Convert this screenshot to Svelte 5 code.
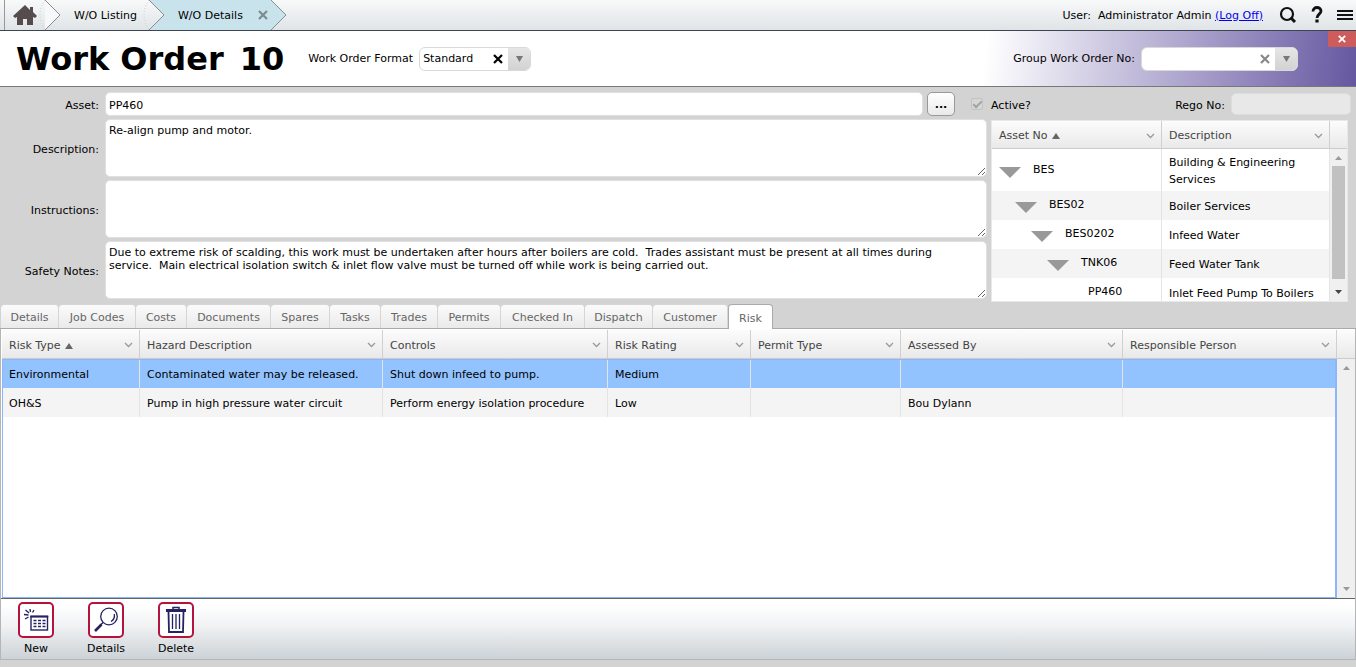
<script>
	let activeTab = 'Risk';
	let selected = 0;
	let format = 'Standard';
	let groupNo = '';

	let asset = 'PP460';
	let description = 'Re-align pump and motor.';
	let instructions = '';
	let safetyNotes = 'Due to extreme risk of scalding, this work must be undertaken after hours after boilers are cold.  Trades assistant must be present at all times during service.  Main electrical isolation switch & inlet flow valve must be turned off while work is being carried out.';

	const tabs = [
		{ name: 'Details', width: 58 },
		{ name: 'Job Codes', width: 77 },
		{ name: 'Costs', width: 51 },
		{ name: 'Documents', width: 84 },
		{ name: 'Spares', width: 59 },
		{ name: 'Tasks', width: 51 },
		{ name: 'Trades', width: 57 },
		{ name: 'Permits', width: 63 },
		{ name: 'Checked In', width: 84 },
		{ name: 'Dispatch', width: 68 },
		{ name: 'Customer', width: 75 },
		{ name: 'Risk', width: 45 }
	];

	const tree = [
		{ no: 'BES', text: 'Building & Engineering Services' },
		{ no: 'BES02', text: 'Boiler Services' },
		{ no: 'BES0202', text: 'Infeed Water' },
		{ no: 'TNK06', text: 'Feed Water Tank' },
		{ no: 'PP460', text: 'Inlet Feed Pump To Boilers', leaf: true }
	];

	const columns = [
		{ name: 'Risk Type', width: 138, sorted: true },
		{ name: 'Hazard Description', width: 243 },
		{ name: 'Controls', width: 225 },
		{ name: 'Risk Rating', width: 143 },
		{ name: 'Permit Type', width: 150 },
		{ name: 'Assessed By', width: 222 },
		{ name: 'Responsible Person' }
	];

	const risks = [
		['Environmental', 'Contaminated water may be released.', 'Shut down infeed to pump.', 'Medium', '', '', ''],
		['OH&S', 'Pump in high pressure water circuit', 'Perform energy isolation procedure', 'Low', '', 'Bou Dylann', '']
	];
</script>

{#snippet cross(size)}
	<svg width={size} height={size} viewBox="0 0 10 10"><path d="M1 1l8 8M9 1l-8 8" stroke="currentColor" stroke-width="2.2" /></svg>
{/snippet}

{#snippet heading(name, sorted)}
	<div class="heading">
		<span>{name}</span>
		{#if sorted}<svg width="8" height="7"><path d="M4 1l4 6H0z" fill="#666" /></svg>{/if}
		<svg class="chevron" width="9" height="6"><path d="M1 1l3.5 3.5L8 1" fill="none" stroke="#999" stroke-width="1.3" /></svg>
	</div>
{/snippet}

{#snippet arrow(up, color)}
	<svg width="7" height="4"><path d={up ? 'M0 4h7L3.5 0z' : 'M0 0h7L3.5 4z'} fill={color} /></svg>
{/snippet}

<div class="page">
	<div class="topbar">
		<nav>
			<a class="home" href="#home" aria-label="Home">
				<svg width="24" height="20" viewBox="0 0 24 20"><path d="M12 0L0 11l2 2 2-1v8h6v-6h4v6h6v-8l2 1 2-2-4-4V2h-3v3z" fill="#564c4e" /></svg>
			</a>
			<svg class="sep" width="18" height="30"><path d="M1 0Q-9 15 1 30" fill="none" stroke="#ccc" stroke-dasharray="1 2" /><path d="M1 0l15 15L1 30" fill="#f6f8f9" stroke="#888e90" /></svg>
			<a class="crumb" href="#listing">W/O Listing</a>
			<svg class="sep" width="18" height="30"><path d="M1 0h17v30H1l15-15z" fill="#c9e3ed" /><path d="M1 0Q-9 15 1 30" fill="none" stroke="#ccc" stroke-dasharray="1 2" /><path d="M1 0l15 15L1 30" fill="none" stroke="#888e90" /></svg>
			<div class="current">
				<a href="#details">W/O Details</a>
				<button aria-label="Close tab">{@render cross(10)}</button>
			</div>
			<svg class="sep" width="18" height="30"><path d="M0 0h1l15 15L1 30H0z" fill="#c9e3ed" /><path d="M1 0l15 15L1 30" fill="none" stroke="#888e90" /></svg>
		</nav>
		<div class="user">
			<span>User:&nbsp; Administrator Admin <a href="#logoff">(Log Off)</a></span>
			<button class="search" aria-label="Search">
				<svg width="18" height="18" viewBox="0 0 18 18" fill="none" stroke="#111"><circle cx="8" cy="8" r="6" stroke-width="2.2" /><path d="M11.5 11.5l4.5 4.5" stroke-width="3" /></svg>
			</button>
			<button class="help" aria-label="Help">
				<svg width="12" height="18" viewBox="0 0 12 18"><path d="M2 5.5C2 0 10 .5 10 5c0 3-4 3.300-4 7" fill="none" stroke="#111" stroke-width="2.800" /><rect x="4.400" y="13.500" width="3.200" height="3" fill="#111" /></svg>
			</button>
			<button class="menu" aria-label="Menu">
				<svg width="16" height="10"><path d="M0 1h16M0 5h16M0 9h16" stroke="#111" stroke-width="2" /></svg>
			</button>
		</div>
	</div>

	<header>
		<h1><span>Work Order</span> <span>10</span></h1>
		<label for="format">Work Order Format</label>
		<div class="combo format">
			<select id="format" bind:value={format}>
				<option value="Standard">Standard</option>
				<option value=""></option>
			</select>
			<button class="clear" aria-label="Clear format" on:click={() => format = ''}>{@render cross(10)}</button>
			<span class="drop"><svg width="7" height="6"><path d="M0 0h7L3.500 6z" fill="#777" /></svg></span>
		</div>
		<div class="group">
			<label for="group">Group Work Order No:</label>
			<div class="combo number">
				<select id="group" bind:value={groupNo}>
					<option value=""></option>
				</select>
				<button class="clear" aria-label="Clear group number" on:click={() => groupNo = ''}>{@render cross(10)}</button>
				<span class="drop"><svg width="7" height="6"><path d="M0 0h7L3.500 6z" fill="#777" /></svg></span>
			</div>
		</div>
		<button class="close" aria-label="Close">{@render cross(8)}</button>
	</header>

	<div class="form">
		<div class="fields">
			<label for="asset">Asset:</label>
			<div class="asset">
				<input id="asset" type="text" bind:value={asset}>
				<button aria-label="Find asset">...</button>
				<input id="active" type="checkbox" checked disabled>
			</div>
			<label for="description">Description:</label>
			<textarea id="description" spellcheck="false" bind:value={description}></textarea>
			<label for="instructions">Instructions:</label>
			<textarea id="instructions" spellcheck="false" bind:value={instructions}></textarea>
			<label for="safety">Safety Notes:</label>
			<textarea id="safety" spellcheck="false" bind:value={safetyNotes}></textarea>
		</div>

		<div class="side">
			<div class="status">
				<label for="active">Active?</label>
				<label class="rego" for="rego">Rego No:</label>
				<input id="rego" type="text" disabled>
			</div>
			<div class="tree">
				<table>
					<colgroup><col class="no"><col></colgroup>
					<thead>
						<tr>
							<th>{@render heading('Asset No', true)}</th>
							<th>{@render heading('Description')}</th>
						</tr>
					</thead>
					<tbody>
						{#each tree as node, i}
							<tr>
								<td>
									<div class="node" style="padding-left: {i * 16}px">
										{#if node.leaf}
											<span class="spacer"></span>
										{:else}
											<svg width="22" height="12"><path d="M0 1h22L11 12z" fill="#999" /></svg>
										{/if}
										<span>{node.no}</span>
									</div>
								</td>
								<td>{node.text}</td>
							</tr>
						{/each}
					</tbody>
				</table>
				<div class="scroll">
					<div class="corner"></div>
					<div class="track">
						{@render arrow(true, '#999')}
						<div class="thumb"></div>
						{@render arrow(false, '#444')}
					</div>
				</div>
			</div>
		</div>
	</div>

	<div class="tabs" role="tablist">
		{#each tabs as tab}
			<button
				role="tab"
				aria-selected={activeTab === tab.name}
				class:active={activeTab === tab.name}
				style="width: {tab.width}px"
				on:click={() => activeTab = tab.name}
			>{tab.name}</button>
		{/each}
	</div>

	<main>
		<div class="grid">
			<div class="pane">
				<table>
					<colgroup>
						{#each columns as column}
							<col style={column.width ? `width: ${column.width}px` : ''}>
						{/each}
					</colgroup>
					<thead>
						<tr>
							{#each columns as column}
								<th>{@render heading(column.name, column.sorted)}</th>
							{/each}
						</tr>
					</thead>
					<tbody>
						{#each risks as risk, i}
							<tr class:selected={selected === i} on:click={() => selected = i}>
								{#each risk as cell}
									<td>{cell}</td>
								{/each}
							</tr>
						{/each}
					</tbody>
				</table>
			</div>
			<div class="scroll">
				<div class="corner"></div>
				<div class="track">
					{@render arrow(true, '#999')}
					{@render arrow(false, '#999')}
				</div>
			</div>
		</div>

		<div class="toolbar">
			<button>
				<svg width="36" height="36" viewBox="0 0 36 36" fill="none" stroke="#262262">
					<rect x="1" y="1" width="34" height="34" rx="4" fill="#fff" stroke="#b5123e" stroke-width="2" />
					<rect x="13" y="14.500" width="16.500" height="13.500" stroke-width="1.400" />
					<path d="M12.300 14.500h18" stroke-width="2" />
					<path d="M15.500 18.500h12M15.500 21.500h12M15.500 24.500h12" stroke-width="1.400" stroke-dasharray="3 1.500" />
					<path d="M6 12.500l4.500 .5M7.500 8l3.500 3M12 7l.5 3M16 8l-1.500 2.500M7 17l3.500-2" stroke-width="1.400" />
				</svg>
				<span>New</span>
			</button>
			<button>
				<svg width="36" height="36" viewBox="0 0 36 36" fill="none" stroke="#262262">
					<rect x="1" y="1" width="34" height="34" rx="4" fill="#fff" stroke="#b5123e" stroke-width="2" />
					<circle cx="21" cy="14.500" r="8.300" stroke-width="1.300" />
					<path d="M15 20.500l-3 3" stroke-width="1.500" />
					<path d="M13.500 22.500L7 29" stroke-width="2.600" />
					<path d="M26.300 12c.6 3.500-.8 6-3.300 7.500" stroke-width="1.300" />
				</svg>
				<span>Details</span>
			</button>
			<button>
				<svg width="36" height="36" viewBox="0 0 36 36" fill="none" stroke="#262262">
					<rect x="1" y="1" width="34" height="34" rx="4" fill="#fff" stroke="#b5123e" stroke-width="2" />
					<path d="M15 7V5.500h6V7" stroke-width="1.500" />
					<path d="M8 8.500h20" stroke-width="3" />
					<path d="M10.500 10l.5 20h14l.5-20" stroke-width="1.800" />
					<path d="M14.500 12v15M18 12v15M21.500 12v15" stroke-width="1.300" />
				</svg>
				<span>Delete</span>
			</button>
		</div>
	</main>
</div>

<style>
	:global(body) {
		margin: 0;
		background: #d3d3d3;
	}

	* {
		box-sizing: border-box;
	}

	.page {
		display: flex;
		flex-direction: column;
		min-height: 100vh;
		padding-bottom: 7px;
		font-family: Verdana, 'DejaVu Sans', sans-serif;
		font-size: 11px;
		color: #000;
	}

	button,
	input,
	select,
	textarea {
		margin: 0;
		font: inherit;
		color: inherit;
	}

	button {
		display: flex;
		align-items: center;
		justify-content: center;
		padding: 0;
		border: none;
		background: none;
		cursor: pointer;
	}

	svg {
		display: block;
		flex: none;
	}

	/* top bar */
	.topbar {
		display: flex;
		justify-content: space-between;
		height: 31px;
		padding-left: 4px;
		border-bottom: 1px solid #3f4452;
		background: linear-gradient(#f8f9f9, #dfe4e7);
	}

	nav {
		display: flex;
		align-items: center;
		border-left: 1px solid #999;
	}

	nav a {
		color: #000;
		text-decoration: none;
	}

	.home {
		padding: 0 7px 0 8px;
	}

	.sep {
		overflow: visible;
	}

	.crumb {
		padding: 0 11px 0 12px;
	}

	.current {
		display: flex;
		align-items: center;
		height: 30px;
		padding: 0 2px 0 12px;
		gap: 15px;
		background: #c9e3ed;
	}

	.current button {
		color: #7d8a90;
	}

	.user {
		display: flex;
		align-items: center;
		padding-right: 3px;
	}

	.user a {
		color: #00e;
	}

	.search {
		margin-left: 16px;
	}

	.help {
		margin: 0 14px;
	}

	/* title */
	header {
		position: relative;
		display: flex;
		align-items: center;
		height: 56px;
		padding-left: 16px;
		border-bottom: 1px solid #777;
		background: linear-gradient(97deg, #fff 1%, #c3bddb 40%, #6557a0) right / 372px 100% no-repeat #fff;
	}

	h1 {
		display: flex;
		gap: 16px;
		margin: 0 24px 0 0;
		font-size: 32px;
		line-height: 40px;
		white-space: nowrap;
	}

	.combo {
		display: flex;
		height: 24px;
		margin-left: 6px;
		border: 1px solid #d9d9d9;
		border-radius: 6px;
		background: #fff;
		overflow: hidden;
	}

	.format {
		width: 112px;
	}

	.number {
		width: 157px;
	}

	.combo select {
		flex: 1;
		min-width: 0;
		padding: 0 3px;
		border: none;
		background: none;
		appearance: none;
	}

	.clear {
		width: 20px;
	}

	.number .clear {
		color: #888;
	}

	.drop {
		display: flex;
		align-items: center;
		justify-content: center;
		width: 22px;
		background: linear-gradient(#e6e6e6, #d2d2d2);
	}

	.group {
		display: flex;
		align-items: center;
		margin-left: auto;
		padding-right: 58px;
	}

	.close {
		position: absolute;
		top: 0;
		right: 0;
		width: 28px;
		height: 16px;
		background: #cd5c5c;
		color: #fff;
	}

	/* form */
	.form {
		display: flex;
		gap: 4px;
		padding: 5px 8px 2px 0;
	}

	.fields {
		flex: 1;
		display: grid;
		grid-template-columns: 99px 1fr;
		grid-template-rows: 24px 58px 58px 58px;
		align-items: center;
		column-gap: 6px;
		row-gap: 3px;
	}

	.form label {
		padding-top: 2px;
	}

	.fields > label {
		text-align: right;
	}

	.asset {
		display: flex;
		align-items: center;
		gap: 4px;
	}

	input[type='text'],
	textarea {
		border: 1px solid #e0e0e0;
		border-radius: 5px;
		background: #fff;
		outline: none;
	}

	.asset input[type='text'] {
		flex: 1;
		height: 24px;
		padding: 2px 3px 0;
	}

	.asset button {
		width: 28px;
		height: 24px;
		border: 1px solid #999;
		border-radius: 5px;
		background: linear-gradient(#fff, #e9e9e9);
		font-weight: bold;
	}

	#active {
		width: 12px;
		height: 12px;
		margin: 0 4px 0 12px;
		border: 1px solid #c3c3c3;
		border-radius: 2px;
		background: #d6d6d6;
		appearance: none;
	}

	#active:checked::after {
		content: '';
		display: block;
		width: 7px;
		height: 3px;
		margin: 2px 1px;
		border: solid #a3a3a3;
		border-width: 0 0 2px 2px;
		transform: rotate(-45deg);
	}

	textarea {
		display: block;
		width: 100%;
		height: 58px;
		padding: 4px 18px 2px 3px;
		line-height: 13px;
		resize: both;
	}

	.side {
		width: 357px;
	}

	.status {
		display: flex;
		align-items: center;
		height: 24px;
		margin: 0 -3px 4px 0;
	}

	.rego {
		margin-left: auto;
	}

	#rego {
		width: 120px;
		height: 22px;
		margin-left: 6px;
		border-color: #dcdcdc;
		background: #e8e8e8;
	}

	.tree {
		display: grid;
		grid-template-columns: 1fr 17px;
		grid-template-rows: 180px;
		border: 1px solid #e8e8e8;
		background: #fff;
		overflow: hidden;
	}

	/* tables */
	table {
		width: 100%;
		border-collapse: separate;
		border-spacing: 0;
		table-layout: fixed;
	}

	th,
	td {
		height: 29px;
		padding: 2px 6px 0 7px;
		border-right: 1px solid #e4e4e4;
		text-align: left;
	}

	th {
		border-right-color: #d0d0d0;
		border-bottom: 1px solid #ccc;
		background: linear-gradient(#fcfcfc, #e9e9e9);
		font-weight: normal;
		color: #444;
	}

	tbody tr:nth-child(even) {
		background: #f4f4f4;
	}

	.heading {
		display: flex;
		align-items: center;
		gap: 4px;
		white-space: nowrap;
	}

	.chevron {
		margin-left: auto;
	}

	.no {
		width: 170px;
	}

	.tree th {
		height: 28px;
	}

	.tree td {
		padding: 5px 6px 3px 7px;
		line-height: 17px;
	}

	.tree td:first-child {
		padding-top: 3px;
	}

	.node {
		display: flex;
		align-items: center;
		gap: 12px;
	}

	.node svg {
		margin-top: 3px;
	}

	.node span {
		margin-bottom: 2px;
	}

	.spacer {
		width: 13px;
	}

	.scroll {
		display: flex;
		flex-direction: column;
		min-height: 0;
	}

	.corner {
		height: 28px;
		border-bottom: 1px solid #ccc;
		background: linear-gradient(#fcfcfc, #e9e9e9);
	}

	.track {
		flex: 1;
		display: flex;
		flex-direction: column;
		align-items: center;
		justify-content: space-between;
		gap: 6px;
		padding: 7px 0;
		background: #f0f0f0;
	}

	.thumb {
		flex: 1;
		width: 13px;
		margin-bottom: 5px;
		background: #c1c1c1;
	}

	/* tabs */
	.tabs {
		display: flex;
		height: 25px;
		padding-left: 1px;
		border-bottom: 1px solid #aaa;
	}

	.tabs button {
		height: 24px;
		padding-top: 2px;
		border: 1px solid #d6d6d6;
		border-width: 1px 1px 0 0;
		border-radius: 4px 4px 0 0;
		background: linear-gradient(#fbfbfb, #eaeaea);
		color: #666;
	}

	.tabs .active {
		height: 25px;
		border-color: #aaa;
		border-left-width: 1px;
		background: #fff;
	}

	/* risk grid */
	main {
		flex: 1;
		display: flex;
		flex-direction: column;
		border: 1px solid #b5b5b5;
		border-top: none;
		background: #fff;
	}

	.grid {
		flex: 1;
		display: grid;
		grid-template-columns: 1fr 18px;
		padding: 1px 0 0 1px;
	}

	.pane {
		position: relative;
	}

	/* focus frame round the rows, over the cells */
	.pane::after {
		content: '';
		position: absolute;
		inset: 29px 0 0 0;
		border: 1px solid #8db6fa;
		border-right-width: 2px;
		pointer-events: none;
	}

	.selected {
		background: #92c3ff;
	}

	.grid .corner {
		height: 29px;
	}

	/* toolbar */
	.toolbar {
		display: flex;
		height: 61px;
		padding-top: 3px;
		border-top: 1px solid #666;
		background: linear-gradient(#fff 10%, #f0f2f3 45%, #ccd2d7);
	}

	.toolbar button {
		flex-direction: column;
		justify-content: flex-start;
		gap: 4px;
		width: 70px;
	}
</style>
